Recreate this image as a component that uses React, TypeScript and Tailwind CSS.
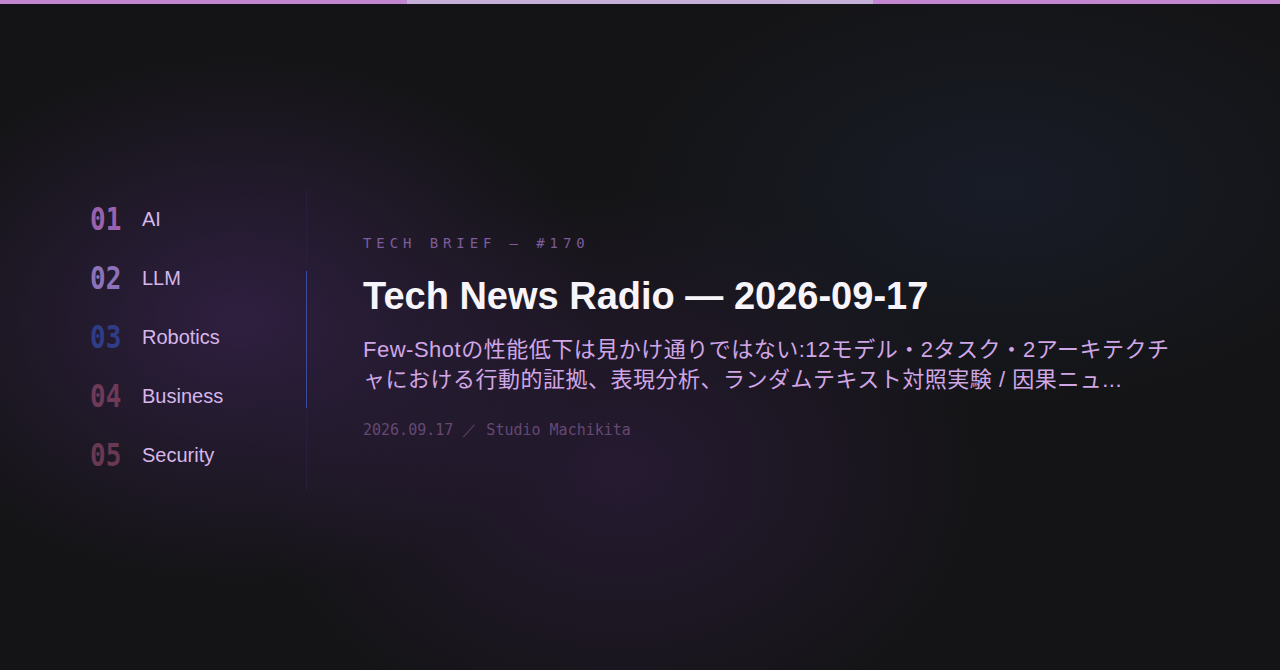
import React from 'react';

const topics = [
  { no: '01', label: 'AI', color: 'text-[#9a62ac]' },
  { no: '02', label: 'LLM', color: 'text-[#8c72b8]' },
  { no: '03', label: 'Robotics', color: 'text-[#2f3d86]' },
  { no: '04', label: 'Business', color: 'text-[#6e3a58]' },
  { no: '05', label: 'Security', color: 'text-[#693852]' },
];

export default function App() {
  return (
    <div className="relative h-[670px] w-full overflow-hidden bg-[#141416] font-['Liberation_Sans','Noto_Sans_CJK_JP',sans-serif]">
      {/* glows */}
      <div className="pointer-events-none absolute inset-0 bg-[radial-gradient(ellipse_520px_380px_at_240px_320px,rgba(58,36,82,0.7),transparent_70%),radial-gradient(ellipse_520px_400px_at_620px_470px,rgba(50,30,68,0.6),transparent_70%),radial-gradient(ellipse_560px_320px_at_1000px_190px,rgba(28,36,56,0.5),transparent_70%)]" />

      {/* progress bar */}
      <div className="relative flex h-1 w-full">
        <div className="w-[407px] bg-[#c387d1]" />
        <div className="w-[466px] bg-[#c4b0d8]" />
        <div className="flex-1 bg-[#c387d1]" />
      </div>

      <div className="relative flex h-[666px] items-center pl-[90px]">
        {/* topic nav */}
        <nav className="flex w-[216px] flex-col">
          {topics.map((t) => (
            <div key={t.no} className="flex h-[59px] items-center gap-[20px]">
              <span className={`inline-block w-[32px] scale-y-125 font-['DejaVu_Sans_Mono',monospace] text-[26px] font-bold leading-none ${t.color}`}>
                {t.no}
              </span>
              <span className="text-[20px] text-[#d6b6ea]">{t.label}</span>
            </div>
          ))}
        </nav>

        {/* divider */}
        <div className="mt-[6px] flex h-[300px] w-px flex-col">
          <div className="h-[81px] bg-[#2a1f3a]" />
          <div className="h-[137px] bg-[#3b4c9e]" />
          <div className="flex-1 bg-[#2a1f3a]" />
        </div>

        {/* article */}
        <div className="ml-[56px] w-[812px]">
          <p className="font-['DejaVu_Sans_Mono',monospace] text-[14px] tracking-[0.35em] text-[#7c5c9c]">
            TECH BRIEF — #170
          </p>
          <h1 className="mt-[19px] text-[38px] font-bold leading-tight text-[#f7f4fa]">
            Tech News Radio — 2026-09-17
          </h1>
          <p className="mt-[14px] text-[22px] leading-[30px] tracking-[0.5px] text-[#d0a6e6]">
            Few-Shotの性能低下は見かけ通りではない:12モデル・2タスク・2アーキテクチャにおける行動的証拠、表現分析、ランダムテキスト対照実験 / 因果ニュ...
          </p>
          <p className="mt-[24px] font-['DejaVu_Sans_Mono',monospace] text-[15px] text-[#654873]">
            2026.09.17 ／ Studio Machikita
          </p>
        </div>
      </div>
    </div>
  );
}
